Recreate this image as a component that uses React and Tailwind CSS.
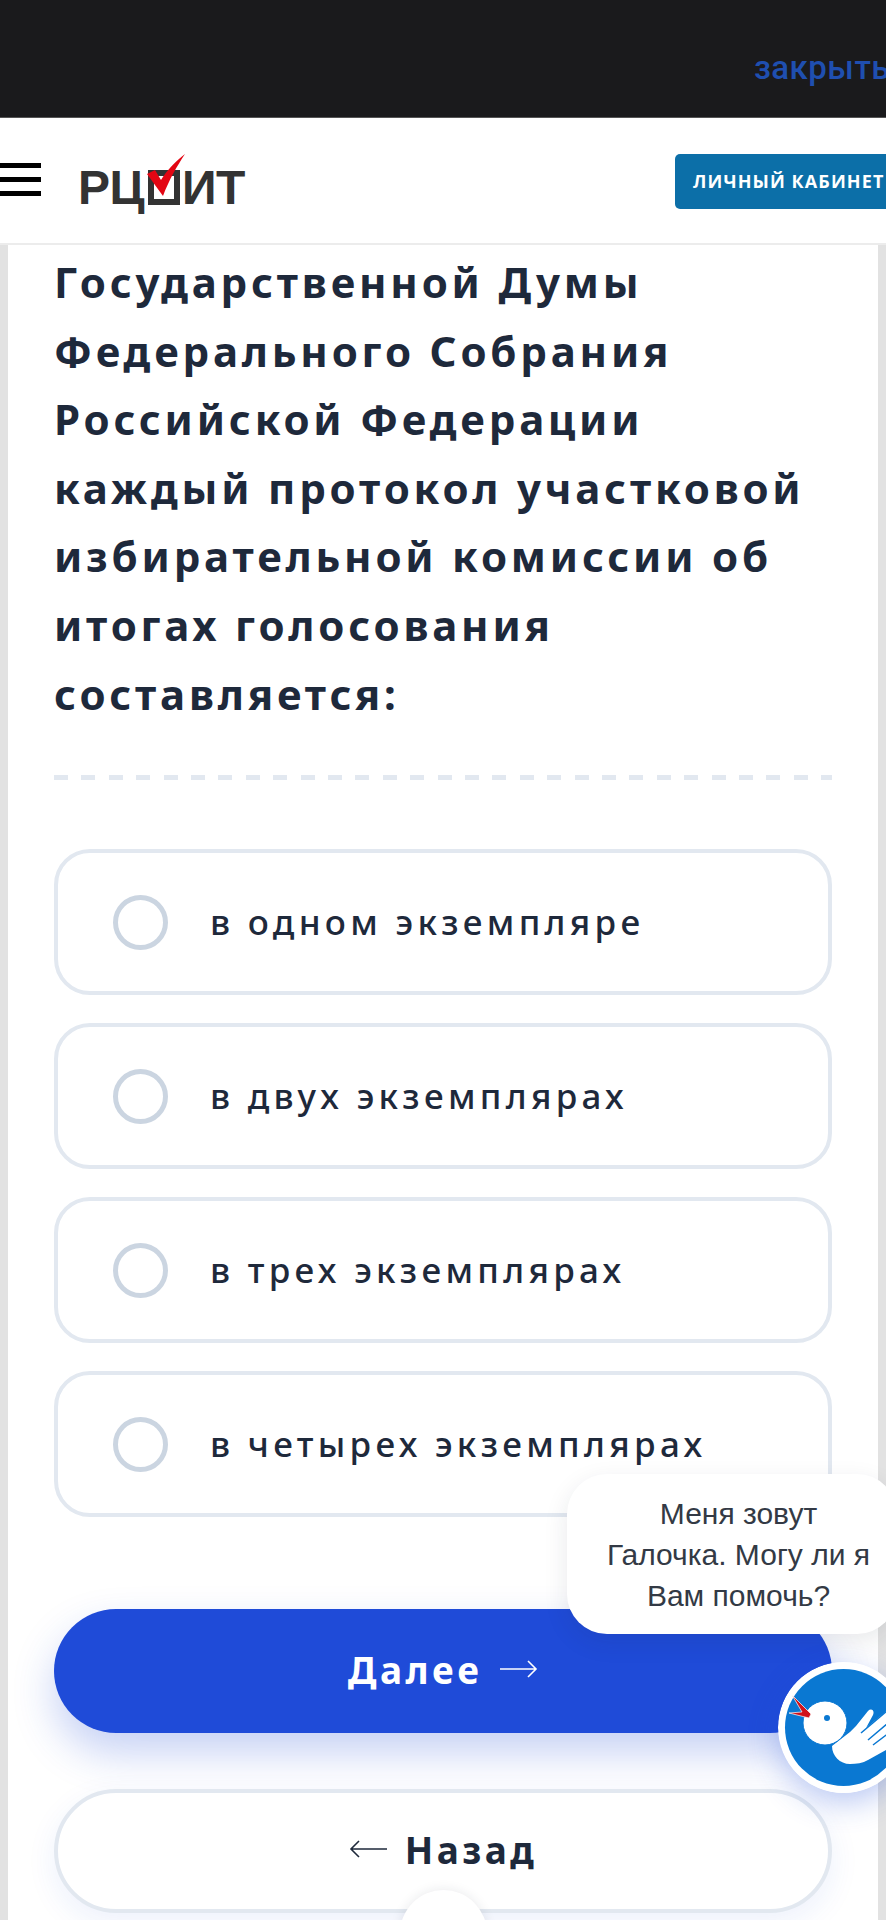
const OPTIONS = ['в одном экземпляре', 'в двух экземплярах', 'в трех экземплярах', 'в четырех экземплярах'];

const QUESTION = [
  'Государственной Думы',
  'Федерального Собрания',
  'Российской Федерации',
  'каждый протокол участковой',
  'избирательной комиссии об',
  'итогах голосования',
  'составляется:',
];

function Logo() {
  return (
    <div className="flex items-center ml-[37px] h-[60px] mt-[14px] font-['Liberation_Sans',sans-serif] font-bold text-[48px] leading-none text-[#333333]">
      <span className="tracking-[-0.5px]">РЦ</span>
      <div className="relative w-[32px] h-[35px] border-[6px] border-[#333333] ml-[4px] mr-[2px]">
        <svg className="absolute left-[-7px] top-[-24px] overflow-visible" width="42" height="46" viewBox="0 0 42 46">
          <path d="M0 22 L8 18 L14 28 C20 18 30 8 38 2 C30 14 22 28 16 44 Z" fill="#e30613" />
        </svg>
      </div>
      <span className="tracking-[-0.5px]">ИТ</span>
    </div>
  );
}

function Mascot() {
  return (
    <svg className="absolute left-[778px] top-[1662px] rounded-full shadow-[0_10px_30px_rgba(31,75,216,0.3)]" width="131" height="131" viewBox="0 0 131 131">
      <circle cx="65.5" cy="65.5" r="65.5" fill="#ffffff" />
      <circle cx="65.5" cy="65.5" r="58.5" fill="#0a78d2" />
      <path d="M72 102 C62 102 54 94 54 84 L72 70 L78 64 L90 49 C93 46 97 48 95 53 L88 66 L125 35 L131 75 L90 98 C85 101 78 102 72 102 Z" fill="#ffffff" />
      <path d="M83 71 L110 48 M90 78 L116 56 M95 83 L120 64" stroke="#0a78d2" strokeWidth="1.5" fill="none" />
      <circle cx="47" cy="61" r="22" fill="#ffffff" stroke="#0a78d2" strokeWidth="1" />
      <circle cx="49" cy="56" r="3" fill="#0a78d2" />
      <path d="M14 33 L33 52 L31 56 L11 51 L24 50 Z" fill="#d0121b" stroke="#ffffff" strokeWidth="0.7" />
    </svg>
  );
}

function ArrowThin({ left }) {
  return (
    <svg className="mt-[-4px]" width="38" height="24" viewBox="0 0 38 24" fill="none" stroke="currentColor" strokeWidth="1.6">
      {left ? <path d="M38 12 H2 M10 4 L2 12 L10 20" /> : <path d="M0 12 H36 M28 4 L36 12 L28 20" />}
    </svg>
  );
}

export default function App() {
  return (
    <div className="relative w-[886px] h-[1920px] overflow-hidden bg-[#e2e2e2] font-['Noto_Sans',sans-serif]">
      <div className="h-[117px] bg-[#1a1a1c] flex justify-end pt-[48px]">
        <span className="text-[33px] leading-[40px] font-medium text-[#1f4fb0] font-['Roboto',sans-serif] tracking-[0.5px] mr-[-4px]">закрыть</span>
      </div>
      <header className="h-[128px] bg-white border-t border-[#555555] border-b-2 border-b-[#ececec] flex items-center justify-between relative z-10">
        <div className="flex items-center">
          <div className="w-[41px] flex flex-col gap-[9px] mt-[-2px]">
            <div className="h-[5px] bg-black" />
            <div className="h-[5px] bg-black" />
            <div className="h-[5px] bg-black" />
          </div>
          <Logo />
        </div>
        <div className="w-[220px] h-[55px] mr-[-9px] mt-[2px] bg-[#0c6fa8] rounded-[5px] flex items-center pl-[18px] text-white text-[18px] font-bold tracking-[1.1px] font-['Open_Sans',sans-serif] whitespace-nowrap">
          ЛИЧНЫЙ КАБИНЕТ
        </div>
      </header>
      <main className="mx-[8px] w-[870px] bg-white h-[1680px] px-[46px] pt-[3px]">
        <div className="text-[42px] leading-[68.6px] font-bold tracking-[3.8px] text-[#1e293b] whitespace-nowrap">
          {QUESTION.map((line) => (
            <div key={line}>{line}</div>
          ))}
        </div>
        <div className="mt-[47px] h-[5px] bg-[repeating-linear-gradient(90deg,#e2e8f0_0,#e2e8f0_14px,transparent_14px,transparent_27.4px)]" />
        <div className="mt-[69px] flex flex-col gap-[28px]">
          {OPTIONS.map((opt) => (
            <div key={opt} className="h-[146px] border-4 border-[#e2e8f0] rounded-[36px] flex items-center pl-[55px]">
              <div className="w-[55px] h-[55px] rounded-full border-[5px] border-[#cbd5e1]" />
              <span className="ml-[42px] text-[35px] font-medium tracking-[4.3px] text-[#1e293b]">{opt}</span>
            </div>
          ))}
        </div>
        <div className="mt-[92px] h-[124px] rounded-full bg-[#1f4bd8] shadow-[0_20px_40px_rgba(31,75,216,0.25)] flex items-center justify-center gap-[18px] text-white text-[37px] font-bold tracking-[3.5px]">
          <span className="mt-[-3px]">Далее</span>
          <ArrowThin />
        </div>
        <div className="mt-[56px] h-[124px] rounded-full border-4 border-[#e2e8f0] bg-white shadow-[0_10px_30px_rgba(31,75,216,0.08)] flex items-center justify-center gap-[18px] text-[#1e293b] text-[37px] font-bold tracking-[3.5px]">
          <ArrowThin left />
          <span className="mt-[-3px]">Назад</span>
        </div>
      </main>
      <div className="absolute left-[567px] top-[1474px] w-[330px] h-[160px] bg-white rounded-[40px] shadow-[0_8px_24px_rgba(30,41,59,0.1)] flex items-center">
        <div className="w-[343px] shrink-0 text-center text-[30px] leading-[41px] text-[#333a45] font-['Liberation_Sans',sans-serif] whitespace-nowrap">
          Меня зовут<br />Галочка. Могу ли я<br />Вам помочь?
        </div>
      </div>
      <Mascot />
      <div className="absolute left-[400px] top-[1890px] w-[87px] h-[87px] rounded-full bg-white shadow-[0_0_12px_rgba(30,41,59,0.1)]" />
    </div>
  );
}
